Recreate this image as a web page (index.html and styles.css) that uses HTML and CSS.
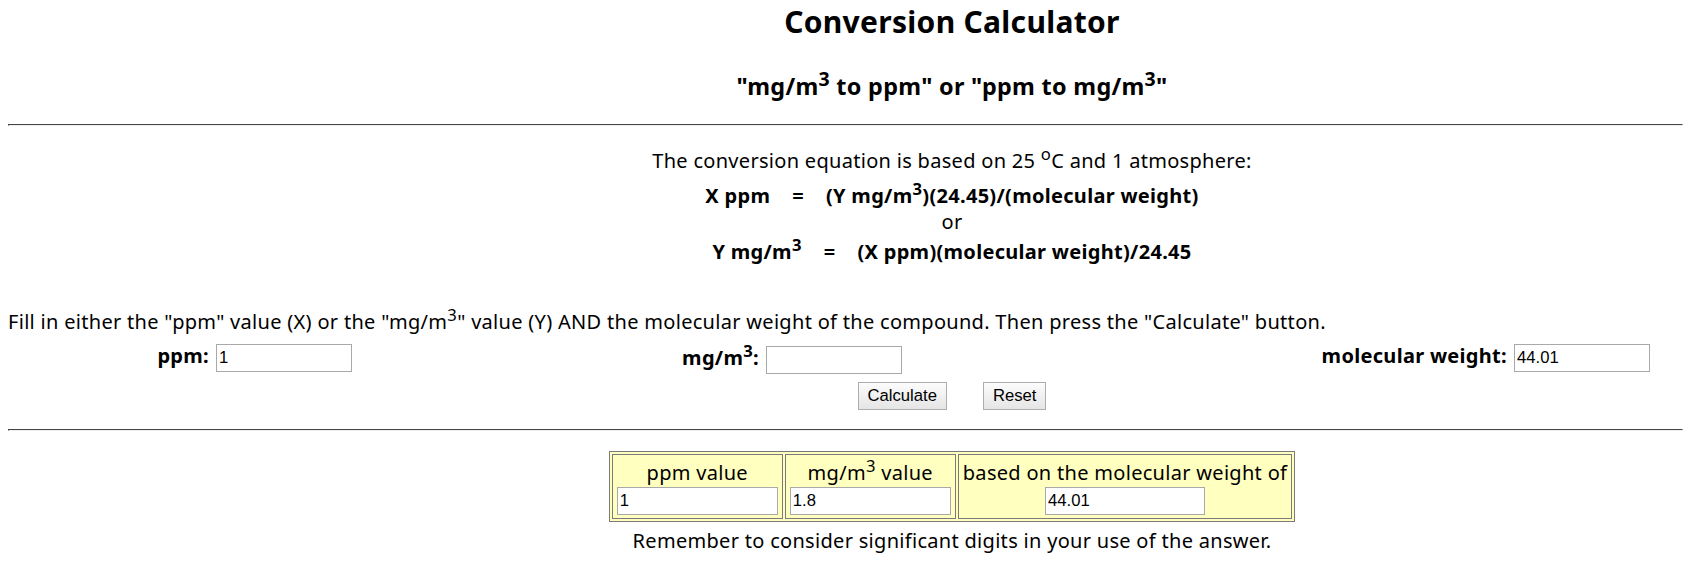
FILE: index.html
```html
<!DOCTYPE html>
<html lang="en">

<head>
    <meta charset="UTF-8">
    <title>Conversion Calculator</title>
    <link rel="stylesheet" href="styles.css">
</head>

<body>
    <h2 class="title centered">Conversion Calculator</h2>
    <h3 class="subtitle centered">"mg/m<sup>3</sup> to ppm" or "ppm to mg/m<sup>3</sup>"</h3>

    <hr>

    <div class="equation centered">
        <p class="eq-intro">The conversion equation is based on 25 <sup>o</sup>C and 1 atmosphere:</p>
        <p class="eq-line eq-x">X ppm&nbsp;&nbsp;&nbsp; =&nbsp;&nbsp;&nbsp; (Y mg/m<sup>3</sup>)(24.45)/(molecular weight)</p>
        <p class="eq-or">or</p>
        <p class="eq-line eq-y">Y mg/m<sup>3</sup>&nbsp;&nbsp;&nbsp; =&nbsp;&nbsp;&nbsp; (X ppm)(molecular weight)/24.45</p>
    </div>

    <p class="intro">Fill in either the "ppm" value (X) or the "mg/m<sup>3</sup>" value (Y) AND the molecular weight of the compound. Then press the "Calculate" button.</p>

    <form id="calc">
        <div class="fields">
            <div class="field">
                <label for="ppm">ppm:</label>
                <input type="text" id="ppm" value="1">
            </div>
            <div class="field">
                <label for="mg">mg/m<sup>3</sup>:</label>
                <input type="text" id="mg">
            </div>
            <div class="field">
                <label for="mw">molecular weight:</label>
                <input type="text" id="mw" value="44.01">
            </div>
        </div>

        <div class="buttons centered">
            <button type="button" id="calcular">Calculate</button>
            <button type="reset">Reset</button>
        </div>
    </form>

    <hr class="hr-bottom">

    <div class="centered">
        <table class="results">
            <tr>
                <td class="col-ppm">
                    <div class="head">ppm value</div>
                    <input type="text" id="res-ppm" value="1">
                </td>
                <td class="col-mg">
                    <div class="head">mg/m<sup>3</sup> value</div>
                    <input type="text" id="res-mg" value="1.8">
                </td>
                <td class="col-mw">
                    <div class="head">based on the molecular weight of</div>
                    <input type="text" id="res-mw" value="44.01">
                </td>
            </tr>
        </table>

        <p class="note">Remember to consider significant digits in your use of the answer.</p>
    </div>

    <script>
        function calcular() {
            const ppm = parseFloat(document.getElementById("ppm").value);
            const mg = parseFloat(document.getElementById("mg").value);
            const mw = parseFloat(document.getElementById("mw").value);

            if (!mw) {
                return;
            }

            let x, y;
            if (!isNaN(ppm)) {
                x = ppm;
                y = ppm * mw / 24.45;
            } else if (!isNaN(mg)) {
                y = mg;
                x = mg * 24.45 / mw;
            } else {
                return;
            }

            document.getElementById("res-ppm").value = Math.round(x * 1000) / 1000;
            document.getElementById("res-mg").value = Math.round(y * 10) / 10;
            document.getElementById("res-mw").value = mw;
        }

        document.getElementById("calcular").addEventListener("click", calcular);
    </script>
</body>

</html>
```
FILE: styles.css
```css
body {
    margin: 8px;
    font-family: "Noto Sans", sans-serif;
    font-size: 20px;
    letter-spacing: 0.3px;
    color: #000;
    background-color: #fff;
}

p {
    margin: 0;
}

sup {
    line-height: 0;
}

/* the original page is wider than the window, so its centre sits right of ours */
.centered {
    padding-left: 213px;
    text-align: center;
}

.title {
    margin: -6px 0 0;
    font-size: 30px;
    line-height: 40px;
}

.subtitle {
    margin: 24px 0 0;
    font-size: 23.4px;
    line-height: 40px;
}

hr {
    margin: 18px 0 0;
    border: 1px inset #eee;
    border-top-color: #9a9a9a;
    border-left-color: #9a9a9a;
}

.equation {
    margin-top: 23px;
    line-height: 24px;
}

.eq-line {
    font-weight: bold;
}

.eq-x {
    margin-top: 11px;
}

.eq-or {
    margin-top: 2px;
}

.eq-y {
    margin-top: 6px;
}

.intro {
    margin-top: 46px;
    line-height: 24px;
    white-space: nowrap;
}

.fields {
    display: grid;
    grid-template-columns: 344px 550px 748px;
    margin-top: 8px;
}

.field {
    display: flex;
    align-items: baseline;
    justify-self: end;
    gap: 7px;
}

.field label {
    font-weight: bold;
}

.field sup {
    line-height: 18px;
}

input {
    font-family: "Liberation Sans", Arial, sans-serif;
    font-size: 16.67px;
    letter-spacing: 0;
    color: #000;
    height: 28px;
    box-sizing: border-box;
    padding: 0 2px;
    border: 1px solid #a9a9a9;
    background-color: #fff;
}

.field input {
    width: 136px;
}

.buttons {
    display: flex;
    justify-content: center;
    gap: 36px;
    margin-top: 8px;
}

button {
    font-family: "Liberation Sans", Arial, sans-serif;
    font-size: 16.67px;
    letter-spacing: 0;
    color: #000;
    height: 28px;
    padding: 0 9px;
    border: 1px solid #adadad;
    border-radius: 0;
    background: linear-gradient(#fcfcfc, #e5e5e5);
}

.hr-bottom {
    margin-top: 19px;
}

.results {
    margin: 20px auto 0;
    border: 1px solid #7a7a7a;
    border-spacing: 2px;
    background-color: #ffffc0;
}

.results td {
    border: 1px solid #7a7a7a;
    padding: 4px 4px 3px;
    text-align: center;
    vertical-align: top;
}

.results .head {
    line-height: 28px;
    white-space: nowrap;
}

.results input {
    display: block;
    width: 160px;
    margin: 0 auto;
}

.col-ppm {
    width: 160px;
}

.col-mg {
    width: 161px;
}

.col-mw {
    width: 324px;
}

.col-ppm input,
.col-mg input {
    width: 161px;
}

.note {
    margin-top: 7px;
    line-height: 24px;
}
```
